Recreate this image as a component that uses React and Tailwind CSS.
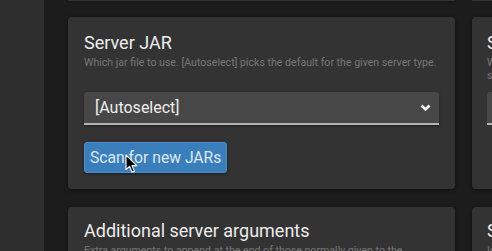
import React from "react";

const Chevron = () => (
  <svg width="11" height="8" viewBox="0 0 11 8" className="text-[#f2f2f2]">
    <path d="M1.5 1.5 L5.5 5.5 L9.5 1.5" fill="none" stroke="currentColor" strokeWidth="2.6" />
  </svg>
);

const Cursor = () => (
  <svg width="13" height="20" viewBox="0 0 13 20" className="absolute left-[125px] top-[154px] pointer-events-none">
    <path
      d="M1 1 L1 15.5 L4.6 12.3 L7.1 18.2 L9.4 17.2 L7 11.6 L11.8 11.6 Z"
      fill="#000"
      stroke="#fff"
      strokeWidth="1.1"
      strokeLinejoin="round"
    />
  </svg>
);

const Card = ({ children, className = "" }) => (
  <div className={`shrink-0 bg-[#333333] rounded-[4px] shadow-[0_1px_4px_rgba(0,0,0,0.45)] px-4 ${className}`}>
    {children}
  </div>
);

export default function App() {
  return (
    <div
      className="relative flex w-[492px] h-[251px] overflow-hidden bg-[#1c1c1c]"
      style={{ fontFamily: "Roboto, 'Liberation Sans', sans-serif" }}
    >
      {/* sidebar */}
      <div className="w-[44px] shrink-0 bg-[#2e2e2e]"></div>

      <div className="flex gap-[17px] pl-[24px]">
        {/* left column */}
        <div className="flex flex-col w-[387px] shrink-0">
          <div className="shrink-0 h-[1px] bg-[#333333] rounded-b-[4px] shadow-[0_1px_3px_rgba(0,0,0,0.45)]"></div>
          <Card className="mt-[16px] h-[172px] pt-[16px]">
            <h2 className="text-[18px] leading-[20px] text-[#ededed]">Server JAR</h2>
            <p className="mt-[3px] text-[10.6px] leading-[13px] text-[#777777] whitespace-nowrap">
              Which jar file to use. [Autoselect] picks the default for the given server type.
            </p>
            <div className="mt-[23px] flex items-center justify-between h-[33px] bg-[#474747] rounded-t-[3px] border-b-2 border-[#b4b4b4] pl-[11px] pr-[8px] shadow-[0_1px_3px_rgba(0,0,0,0.4)]">
              <span className="text-[16px] text-[#eeeeee]">[Autoselect]</span>
              <Chevron />
            </div>
            <button className="mt-[17px] h-[31px] px-[5px] bg-[#3a7fbb] rounded-[3px] border border-[#4a8ecb] text-[15.7px] text-[#dce8f3] shadow-[0_1px_3px_rgba(0,0,0,0.5)]">
              Scan for new JARs
            </button>
          </Card>
          <Card className="mt-[18px] h-[80px] pt-[14px]">
            <h2 className="text-[18px] leading-[20px] text-[#ededed] whitespace-nowrap">Additional server arguments</h2>
            <p className="mt-[3px] text-[10.6px] leading-[13px] text-[#777777] whitespace-nowrap">
              Extra arguments to append at the end of those normally given to the
            </p>
          </Card>
        </div>

        {/* right column */}
        <div className="flex flex-col w-[300px] shrink-0">
          <div className="shrink-0 h-[1px] bg-[#333333] rounded-b-[4px]"></div>
          <Card className="mt-[16px] h-[172px] pt-[16px] pl-[15px]">
            <h2 className="text-[18px] leading-[20px] text-[#ededed] whitespace-nowrap">Server type</h2>
            <p className="mt-[3px] text-[10.6px] leading-[13px] text-[#777777]">
              What kind of server this is. Used for automatic jar selection and
              additional features.
            </p>
            <div className="mt-[10px] h-[33px] bg-[#474747] rounded-t-[3px] border-b-2 border-[#b4b4b4]"></div>
          </Card>
          <Card className="mt-[18px] h-[80px] pt-[14px] pl-[15px]">
            <h2 className="text-[18px] leading-[20px] text-[#ededed] whitespace-nowrap">Server icon</h2>
            <p className="mt-[3px] text-[10.6px] leading-[13px] text-[#777777] whitespace-nowrap">
              Icon shown in the server list.
            </p>
          </Card>
        </div>
      </div>

      <Cursor />
    </div>
  );
}
